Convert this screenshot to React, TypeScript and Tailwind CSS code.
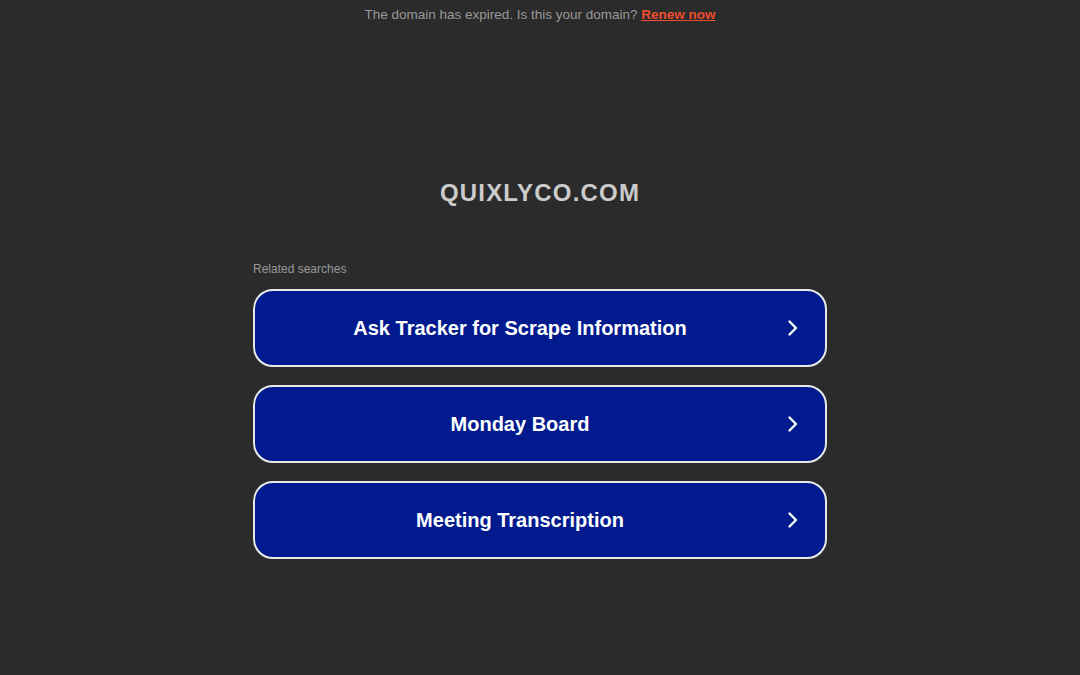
import React from "react";

const items = ["Ask Tracker for Scrape Information", "Monday Board", "Meeting Transcription"];

function Chevron() {
  return (
    <svg width="14" height="18" viewBox="0 0 14 18" fill="none" className="absolute right-[25px] top-1/2 -translate-y-1/2">
      <path d="M3.5 2.5 L10 9 L3.5 15.5" stroke="white" strokeWidth="2.4" strokeLinecap="round" strokeLinejoin="round" />
    </svg>
  );
}

export default function App() {
  return (
    <div className="min-h-[675px] w-full bg-[#2b2b2b] flex flex-col items-center" style={{ fontFamily: '"Liberation Sans", Arial, sans-serif' }}>
      <div className="pt-[7px] text-[13.5px] leading-[16px] text-[#999999]">
        The domain has expired. Is this your domain?{" "}
        <a href="#" className="font-bold text-[#ed4c2f] underline">Renew now</a>
      </div>
      <h1 className="mt-[156px] text-[24px] leading-[28px] font-bold text-[#cccccc] tracking-[1.2px]">QUIXLYCO.COM</h1>
      <div className="mt-[55px] w-[574px] flex flex-col">
        <div className="text-[12px] leading-[14px] text-[#999999]">Related searches</div>
        <div className="mt-[13px] flex flex-col gap-[18px]">
          {items.map((t) => (
            <div key={t} className="relative h-[78px] rounded-[20px] border-2 border-[#e8e8e8] bg-[#011a8d] flex items-center justify-center pr-[40px]">
              <span className="text-[20px] font-bold text-white">{t}</span>
              <Chevron />
            </div>
          ))}
        </div>
      </div>
    </div>
  );
}
